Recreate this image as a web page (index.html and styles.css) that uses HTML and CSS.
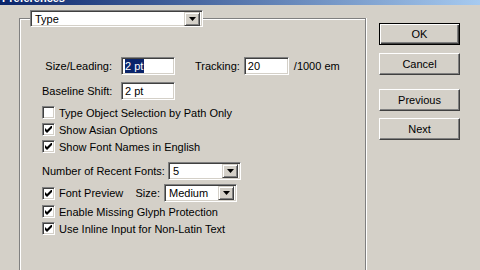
FILE: index.html
```html
<!DOCTYPE html>
<html lang="en">
<head>
  <meta charset="UTF-8">
  <title>Preferences</title>
  <link rel="stylesheet" href="styles.css">
</head>
<body>
  <div class="titlebar"><span>Preferences</span></div>

  <div class="dialog">
    <div class="group">
      <div class="combo combo-section">
        <span class="combo-value">Type</span>
        <span class="combo-btn"><svg width="7" height="4" viewBox="0 0 7 4"><path d="M0 0h7L3.5 4z" fill="#000"/></svg></span>
      </div>

      <div class="row row-size">
        <span class="lbl">Size/Leading:</span>
        <span class="field field-pt"><span class="selected">2 pt</span></span>
        <span class="lbl-track">Tracking:</span>
        <span class="field field-track">20</span>
        <span class="unit">/1000 em</span>
      </div>
      <div class="row row-shift">
        <span class="lbl">Baseline Shift:</span>
        <span class="field field-pt">2 pt</span>
      </div>

      <div class="checks checks-top">
        <div class="check-row"><span class="box"></span>Type Object Selection by Path Only</div>
        <div class="check-row"><span class="box on"><svg width="7" height="7" viewBox="0 0 7 7"><path d="M0 2v3l2 2 5-5V-1L2 4z" fill="#000"/></svg></span>Show Asian Options</div>
        <div class="check-row"><span class="box on"><svg width="7" height="7" viewBox="0 0 7 7"><path d="M0 2v3l2 2 5-5V-1L2 4z" fill="#000"/></svg></span>Show Font Names in English</div>
      </div>

      <div class="row row-recent">
        <span class="lbl-recent">Number of Recent Fonts:</span>
        <div class="combo combo-small">
          <span class="combo-value">5</span>
          <span class="combo-btn"><svg width="7" height="4" viewBox="0 0 7 4"><path d="M0 0h7L3.5 4z" fill="#000"/></svg></span>
        </div>
      </div>
      <div class="row row-preview">
        <span class="box on"><svg width="7" height="7" viewBox="0 0 7 7"><path d="M0 2v3l2 2 5-5V-1L2 4z" fill="#000"/></svg></span>
        <span class="preview-text">Font Preview</span>
        <span class="lbl-size">Size:</span>
        <div class="combo combo-small">
          <span class="combo-value">Medium</span>
          <span class="combo-btn"><svg width="7" height="4" viewBox="0 0 7 4"><path d="M0 0h7L3.5 4z" fill="#000"/></svg></span>
        </div>
      </div>

      <div class="checks checks-bottom">
        <div class="check-row"><span class="box on"><svg width="7" height="7" viewBox="0 0 7 7"><path d="M0 2v3l2 2 5-5V-1L2 4z" fill="#000"/></svg></span>Enable Missing Glyph Protection</div>
        <div class="check-row"><span class="box on"><svg width="7" height="7" viewBox="0 0 7 7"><path d="M0 2v3l2 2 5-5V-1L2 4z" fill="#000"/></svg></span>Use Inline Input for Non-Latin Text</div>
      </div>
    </div>

    <div class="buttons">
      <div class="btn btn-default">OK</div>
      <div class="btn btn-cancel">Cancel</div>
      <div class="btn btn-prev">Previous</div>
      <div class="btn btn-next">Next</div>
    </div>
  </div>
</body>
</html>
```

FILE: styles.css
```css
body {
  margin: 0;
  height: 270px;
  overflow: hidden;
  background: #d4d0c8;
  font-family: "Liberation Sans", Arial, sans-serif;
  font-size: 11px;
  color: #000;
}

/* title bar, mostly scrolled off the top */
.titlebar {
  height: 18px;
  margin-top: -13px;
  padding-left: 2px;
  overflow: hidden;
  background: linear-gradient(to right, #0a246a, #a6caf0);
  color: #fff;
  font-weight: bold;
  line-height: 22px;
}

.dialog {
  display: flex;
  align-items: flex-start;
}

/* etched group box */
.group {
  box-sizing: border-box;
  width: 347px;
  height: 252px;
  margin: 13px 0 0 19px;
  border: 1px solid #808080;
  border-bottom: 0;
  box-shadow: inset 1px 1px #fff, 1px 0 #fff;
}

/* sunken controls */
.field, .combo, .box {
  box-sizing: border-box;
  background: #fff;
  border: 1px solid;
  border-color: #808080 #fff #fff #808080;
  box-shadow: inset 1px 1px #404040, inset -1px -1px #d4d0c8;
}

.combo {
  display: flex;
  align-items: center;
  height: 18px;
  padding: 2px;
}
.combo-value {
  flex: 1;
  padding-left: 2px;
  line-height: 14px;
}
.combo-btn {
  box-sizing: border-box;
  width: 16px;
  height: 14px;
  display: flex;
  align-items: center;
  justify-content: center;
  background: #d4d0c8;
  border: 1px solid;
  border-color: #d4d0c8 #404040 #404040 #d4d0c8;
  box-shadow: inset 1px 1px #fff, inset -1px -1px #808080;
}
.combo-section {
  width: 173px;
  height: 17px;
  margin: -9px 0 0 10px;
}
.combo-small {
  width: 73px;
}

.row {
  display: flex;
  align-items: center;
  height: 18px;
  margin-left: 22px;
}
.row-size { margin-top: 30px; }
.row-shift { margin-top: 7px; }
.row-recent { margin-top: 7px; }
.row-preview { margin-top: 4px; }

.lbl {
  width: 70px;
  margin-right: 9px;
  text-align: right;
  white-space: nowrap;
}
.field {
  height: 18px;
  padding: 0 3px;
  line-height: 16px;
}
.field-pt { width: 54px; }
.field-track { width: 45px; }
.selected {
  background: #0a246a;
  color: #fff;
  padding: 1px 1px 1px 0;
}
.lbl-track {
  margin: 0 4px 0 20px;
}
.unit {
  margin-left: 5px;
}

.checks { margin-left: 22px; }
.checks-top { margin-top: 4px; }
.checks-bottom { margin-top: 1px; }
.check-row {
  display: flex;
  align-items: center;
  height: 17px;
}
.box {
  width: 13px;
  height: 13px;
  margin-right: 4px;
  flex-shrink: 0;
  display: flex;
  align-items: center;
  justify-content: center;
}

.lbl-recent { width: 126px; }
.preview-text { width: 73px; }
.lbl-size {
  width: 28px;
  margin-right: 4px;
  text-align: right;
}

/* push buttons */
.buttons {
  margin: 18px 0 0 13px;
  width: 81px;
}
.btn {
  box-sizing: border-box;
  height: 22px;
  line-height: 20px;
  text-align: center;
  background: #d4d0c8;
  border: 1px solid;
  border-color: #fff #404040 #404040 #fff;
  box-shadow: inset -1px -1px #808080;
}
.btn-default {
  border-color: #000;
  box-shadow: inset 1px 1px #fff, inset -1px -1px #404040, inset -2px -2px #808080;
}
.btn-cancel { margin-top: 8px; }
.btn-prev { margin-top: 14px; }
.btn-next { margin-top: 7px; }
```
